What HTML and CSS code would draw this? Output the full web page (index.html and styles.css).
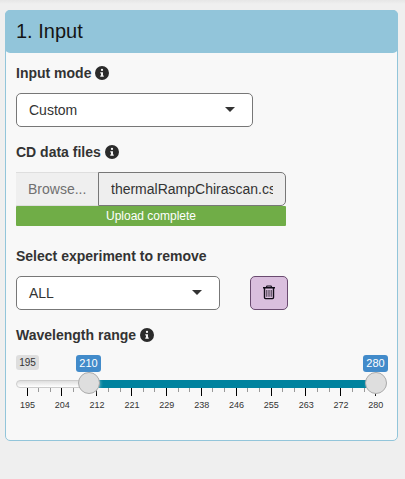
FILE: index.html
```html
<!DOCTYPE html>
<html lang="en">
<head>
<meta charset="utf-8">
<title>Input</title>
<link rel="stylesheet" href="styles.css">
</head>
<body>
<svg class="defs" aria-hidden="true"><symbol id="info" viewBox="0 0 512 512"><path fill-rule="evenodd" d="M256 0a256 256 0 1 0 0 512a256 256 0 1 0 0-512zM256 100a42 42 0 1 1 0 84a42 42 0 1 1 0-84zM204 224h76c7 0 12 5 12 12v112h16c7 0 12 5 12 12v24c0 7-5 12-12 12H204c-7 0-12-5-12-12v-24c0-7 5-12 12-12h16v-76h-16c-7 0-12-5-12-12v-24c0-7 5-12 12-12z"/></symbol></svg>
<main class="box">
  <h1 class="box-header">1. Input</h1>
  <div class="box-body">
    <div class="label">Input mode <svg class="info"><use href="#info"/></svg></div>
    <div class="select select-mode"><span>Custom</span><i class="caret"></i></div>

    <div class="label label-files">CD data files <svg class="info"><use href="#info"/></svg></div>
    <div class="file"><span class="browse">Browse...</span><span class="filename"><span>thermalRampChirascan.csv</span></span></div>
    <div class="progress">Upload complete</div>

    <div class="label label-remove">Select experiment to remove</div>
    <div class="row">
      <div class="select select-exp"><span>ALL</span><i class="caret"></i></div>
      <button class="trash" aria-label="Remove"><svg width="14" height="16" viewBox="0 0 14 16"><g fill="none" stroke="#100c18"><path stroke-width="1.4" d="M1 2.8H13M2.5 3V12.6Q2.5 13.6 3.5 13.6H10.5Q11.5 13.6 11.5 12.6V3"/><path stroke-width="1.2" d="M4.2 2.6L5 1H9L9.8 2.6"/><path stroke-width=".8" d="M4.8 5V11.8M7 5V11.8M9.2 5V11.8"/></g></svg></button>
    </div>

    <div class="label label-range">Wavelength range <svg class="info"><use href="#info"/></svg></div>
    <div class="slider">
      <div class="values"><span class="min">195</span><span class="value from">210</span><span class="value to">280</span></div>
      <div class="track"><div class="bar"></div><i class="handle handle-from"></i><i class="handle handle-to"></i></div>
      <svg class="ticks" width="371" height="8" shape-rendering="crispEdges"><path fill="#000" d="M11 0h1v8h-1zM45 0h1v8h-1zM80 0h1v8h-1zM115 0h1v8h-1zM150 0h1v8h-1zM185 0h1v8h-1zM220 0h1v8h-1zM255 0h1v8h-1zM289 0h1v8h-1zM324 0h1v8h-1zM359 0h1v8h-1z"/><path fill="#999" d="M22 0h1v4h-1zM34 0h1v4h-1zM57 0h1v4h-1zM69 0h1v4h-1zM92 0h1v4h-1zM104 0h1v4h-1zM127 0h1v4h-1zM138 0h1v4h-1zM162 0h1v4h-1zM173 0h1v4h-1zM196 0h1v4h-1zM208 0h1v4h-1zM231 0h1v4h-1zM243 0h1v4h-1zM266 0h1v4h-1zM278 0h1v4h-1zM301 0h1v4h-1zM313 0h1v4h-1zM336 0h1v4h-1zM348 0h1v4h-1z"/></svg>
      <div class="scale"><span>195</span><span>204</span><span>212</span><span>221</span><span>229</span><span>238</span><span>246</span><span>255</span><span>263</span><span>272</span><span>280</span></div>
    </div>
  </div>
</main>
</body>
</html>
```
FILE: styles.css
```css
* { box-sizing: border-box; }
body {
  margin: 0;
  padding: 10px 7px 0 5px;
  height: 479px;
  overflow: hidden;
  background: linear-gradient(#e6e6e6, #efefef 4px);
  font: 14px/20px "Liberation Sans", Arial, sans-serif;
  color: #333;
}
.defs { position: absolute; width: 0; height: 0; }
.box {
  height: 431px;
  border: 1px solid #92c5da;
  border-radius: 5px;
  background: #f8f8f8;
}
.box-header {
  margin: -1px -1px 0;
  height: 43px;
  padding: 0 11px;
  border-radius: 5px;
  background: #92c5da;
  color: #151515;
  font-size: 20px;
  font-weight: 400;
  line-height: 43px;
}
.box-body { padding: 10px 10px 0; }
.label { display: flex; align-items: center; gap: 4px; height: 20px; font-weight: 700; }
.info { width: 14px; height: 14px; fill: #2b2b2b; }
.select {
  display: flex;
  align-items: center;
  justify-content: space-between;
  height: 34px;
  padding: 0 17px 0 12px;
  border: 1px solid #777;
  border-radius: 5px;
  background: #fff;
}
.caret { border: 5px solid transparent; border-top-color: #333; border-bottom: 0; margin-top: -2px; }
.select-mode { width: 237px; margin-top: 10px; }
.label-files { margin-top: 15px; }
.file { display: flex; width: 270px; height: 34px; margin-top: 10px; line-height: 32px; }
.browse {
  width: 82px;
  padding-left: 12px;
  border: solid #dedede;
  border-width: 1px 0;
  background: #efefef;
  color: #707070;
}
.filename {
  flex: 1;
  min-width: 0;
  padding: 0 12px;
  border: 1px solid #777;
  border-radius: 0 5px 5px 0;
  background: #eee;
}
.filename span { display: block; overflow: hidden; }
.progress {
  width: 270px;
  height: 20px;
  border-radius: 1px;
  background: #70ad47;
  color: #fff;
  font-size: 12px;
  text-align: center;
}
.label-remove { margin-top: 20px; }
.row { display: flex; gap: 30px; margin-top: 10px; }
.select-exp { width: 204px; }
.trash {
  display: flex;
  justify-content: center;
  width: 38px;
  height: 34px;
  padding: 8px 0 0;
  border: 1px solid #6a4b70;
  border-radius: 5px;
  background: #dabfde;
}
.label-range { margin-top: 15px; }
.slider { width: 371px; margin-top: 10px; }
.values { position: relative; display: flex; height: 25px; font-size: 11px; line-height: 17px; }
.min {
  width: 23px;
  height: 15px;
  border-radius: 3px;
  background: #dedede;
  font-size: 10px;
  line-height: 15px;
  text-align: center;
}
.value {
  position: absolute;
  top: 0;
  width: 25px;
  height: 17px;
  border-radius: 3px;
  background: #428bca;
  color: #fff;
  text-align: center;
}
.from { left: 60px; }
.to { left: 347px; }
.track {
  position: relative;
  height: 8px;
  border: 1px solid #ccc;
  border-radius: 8px;
  background: linear-gradient(#dedede, #fff);
}
.bar { position: absolute; top: -1px; left: 72px; width: 287px; height: 8px; background: #00829e; }
.handle {
  position: absolute;
  z-index: 1;
  top: -9px;
  width: 22px;
  height: 22px;
  border: 1px solid #ababab;
  border-radius: 50%;
  background: #dedede;
  box-shadow: 1px 1px 3px rgba(255, 255, 255, .3);
}
.handle-from { left: 61px; }
.handle-to { left: 348px; }
.ticks { display: block; }
.scale {
  display: grid;
  grid-template-columns: repeat(11, 34.85px);
  margin: 4px 0 0 -6px;
  font-size: 9px;
  line-height: 10px;
  text-align: center;
}
```
